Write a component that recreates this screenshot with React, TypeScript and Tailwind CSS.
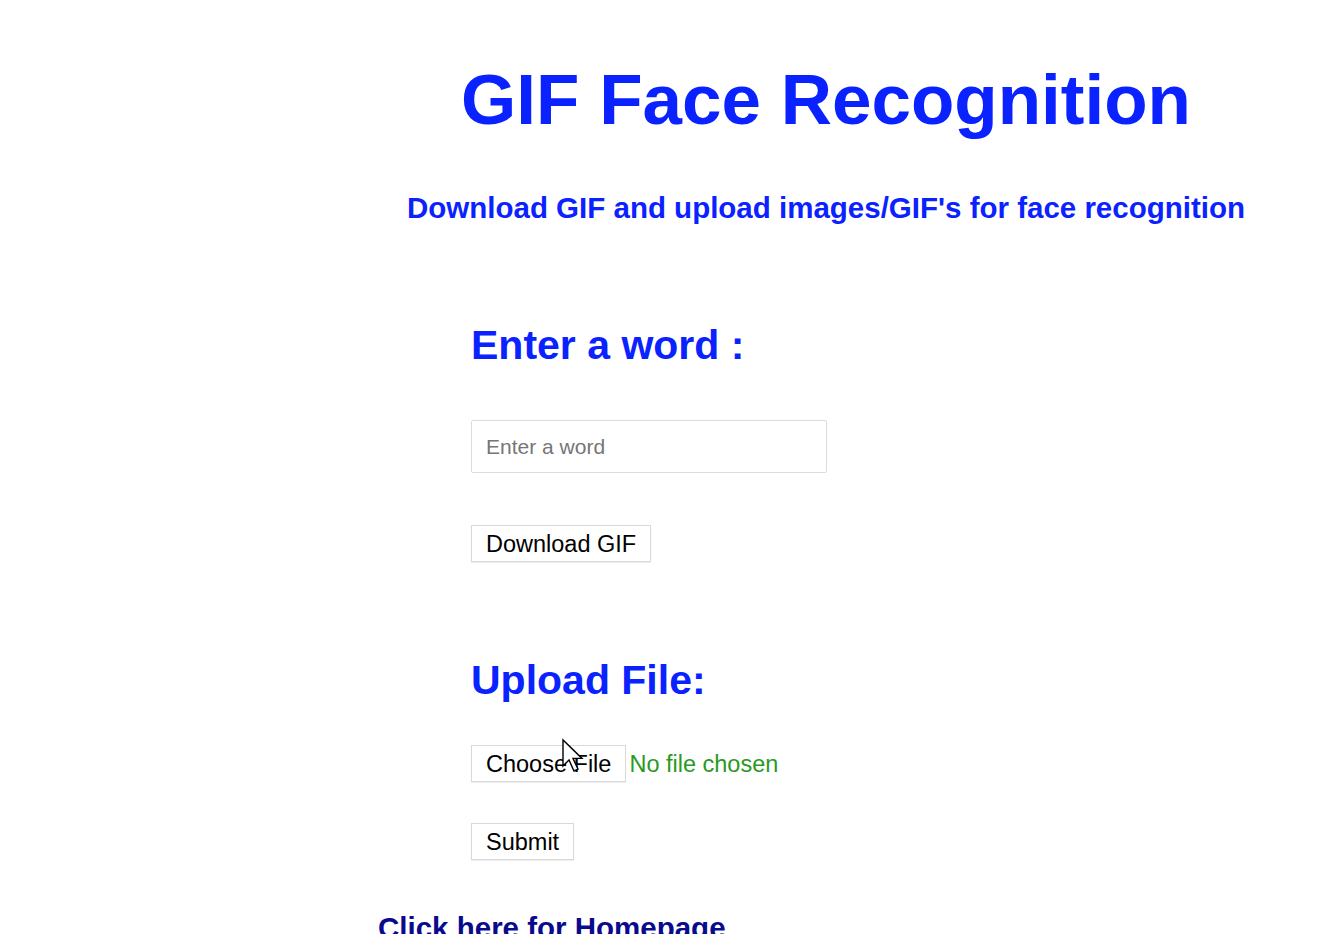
import React from "react";

const font = "font-['Liberation_Sans',Arial,sans-serif]";

const Btn = ({ children }: { children: React.ReactNode }) => (
  <button className="flex h-[37px] items-center border border-[#d9d9d9] bg-white px-[14px] pt-[3px] text-[23.5px] leading-none text-black shadow-[0_1px_1px_rgba(0,0,0,0.06)]">
    {children}
  </button>
);

export default function App() {
  return (
    <div className={`relative min-h-[934px] w-full overflow-hidden bg-white ${font}`}>
      {/* header */}
      <div className="ml-[321px] flex flex-col items-center">
        <h1 className="mt-[64px] text-[71px] font-bold leading-none text-[#0a22ff]">
          GIF Face Recognition
        </h1>
        <p className="mt-[58px] text-[29.5px] font-bold leading-none text-[#0a22ff]">
          Download GIF and upload images/GIF's for face recognition
        </p>
      </div>

      {/* form */}
      <div className="ml-[471px] flex flex-col items-start">
        <h2 className="mt-[102px] text-[41px] font-bold leading-none text-[#0a22ff]">
          Enter a word :
        </h2>
        <input
          type="text"
          placeholder="Enter a word"
          className="mt-[54px] h-[53px] w-[356px] rounded-[2px] border border-[#dcdcdc] px-[14px] pt-[2px] text-[21px] text-black outline-none placeholder:text-[#767676]"
        />
        <div className="mt-[52px]">
          <Btn>Download GIF</Btn>
        </div>

        <h2 className="mt-[98px] text-[41px] font-bold leading-none text-[#0a22ff]">
          Upload File:
        </h2>
        <div className="mt-[44px] flex items-center gap-[3px]">
          <Btn>Choose File</Btn>
          <span className="pt-[3px] text-[23.5px] leading-none text-[#2a9a1e]">No file chosen</span>
        </div>
        <div className="mt-[41px]">
          <Btn>Submit</Btn>
        </div>
      </div>

      <a
        href="#"
        className="ml-[378px] mt-[53px] block text-[29.5px] font-bold leading-none text-[#0a0a8c]"
      >
        Click here for Homepage
      </a>

      {/* mouse pointer */}
      <svg
        className="pointer-events-none absolute left-[561px] top-[738px]"
        width="26"
        height="36"
        viewBox="0 0 13 18"
      >
        <path
          d="M1 1 L1 14 L4 11 L6.5 16.5 L8.5 15.6 L6 10.2 L10.5 10.2 Z"
          fill="white"
          stroke="black"
          strokeWidth="0.7"
          strokeLinejoin="miter"
        />
      </svg>
    </div>
  );
}
